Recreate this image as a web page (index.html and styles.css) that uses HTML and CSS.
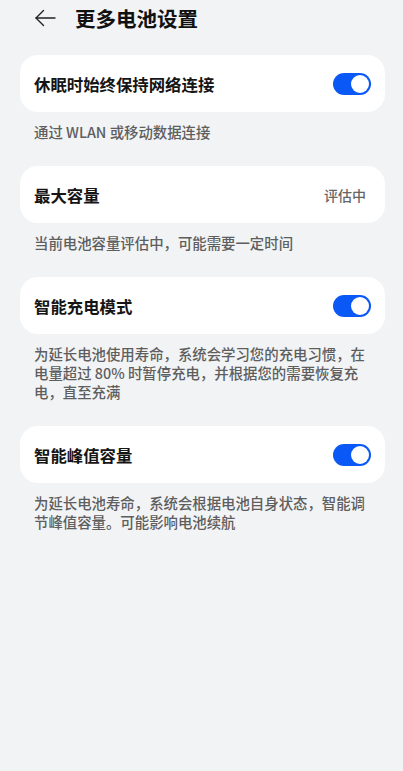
FILE: index.html
```html
<!DOCTYPE html>
<html lang="zh-CN">
<head>
<meta charset="utf-8">
<link rel="stylesheet" href="styles.css">
</head>
<body>
<div class="page">
  <header class="header">
    <svg class="back" width="22" height="18" viewBox="0 0 22 18" fill="none" stroke="#222" stroke-width="1.4" stroke-linecap="round" stroke-linejoin="round">
      <path d="M21 9H2"/>
      <path d="M9.5 1.5L2 9l7.5 7.5"/>
    </svg>
    <h1 class="title">更多电池设置</h1>
  </header>

  <section class="group">
    <div class="card">
      <span class="card-title">休眠时始终保持网络连接</span>
      <span class="toggle"><span class="knob"></span></span>
    </div>
    <p class="desc">通过 WLAN 或移动数据连接</p>
  </section>

  <section class="group">
    <div class="card">
      <span class="card-title">最大容量</span>
      <span class="value">评估中</span>
    </div>
    <p class="desc">当前电池容量评估中，可能需要一定时间</p>
  </section>

  <section class="group">
    <div class="card">
      <span class="card-title">智能充电模式</span>
      <span class="toggle"><span class="knob"></span></span>
    </div>
    <p class="desc">为延长电池使用寿命，系统会学习您的充电习惯，在电量超过 80% 时暂停充电，并根据您的需要恢复充电，直至充满</p>
  </section>

  <section class="group">
    <div class="card">
      <span class="card-title">智能峰值容量</span>
      <span class="toggle"><span class="knob"></span></span>
    </div>
    <p class="desc">为延长电池寿命，系统会根据电池自身状态，智能调节峰值容量。可能影响电池续航</p>
  </section>
</div>
</body>
</html>
```

FILE: styles.css
```css
html, body {
  margin: 0;
  padding: 0;
  background: #f1f3f5;
}
body {
  font-family: "Noto Sans CJK SC", "Noto Sans", sans-serif;
  color: #191919;
}
.page {
  width: 403px;
  min-height: 771px;
  box-sizing: border-box;
  padding: 0 18px 0 20px;
}
.header {
  height: 36px;
  display: flex;
  align-items: center;
  margin-bottom: 19px;
}
.back {
  margin-left: 14px;
  margin-right: 19px;
  flex: none;
}
.title {
  margin: 0;
  font-size: 20.5px;
  font-weight: 700;
  line-height: 28px;
  color: #111;
}
.group {
  margin: 0 0 25px 0;
}
.card {
  height: 57px;
  background: #ffffff;
  border-radius: 18px;
  display: flex;
  align-items: center;
  justify-content: space-between;
  padding: 0 14px;
  box-sizing: border-box;
}
.card-title {
  font-size: 16.4px;
  font-weight: 700;
  color: #151515;
}
.value {
  font-size: 14px;
  font-weight: 500;
  color: #666;
  margin-right: 5px;
}
.toggle {
  width: 38px;
  height: 22px;
  border-radius: 11px;
  background: #0a59f7;
  display: flex;
  align-items: center;
  justify-content: flex-end;
  padding: 0 2px;
  box-sizing: border-box;
}
.knob {
  width: 18px;
  height: 18px;
  border-radius: 50%;
  background: #fff;
}
.desc {
  margin: 10px 0 0 0;
  padding: 0 14px;
  font-size: 14.4px;
  font-weight: 500;
  line-height: 19px;
  color: #5e5e5e;
}
```
